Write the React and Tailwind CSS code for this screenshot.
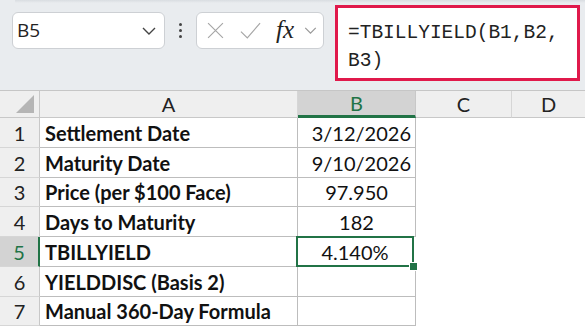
import React from 'react';

// Excel-style sheet: formula bar + small grid, B5 selected

const rows = [
  { n: 1, label: 'Settlement Date', value: '3/12/2026', align: 'right', h: 'h-[30px]' },
  { n: 2, label: 'Maturity Date', value: '9/10/2026', align: 'right', h: 'h-[30px]' },
  { n: 3, label: 'Price (per $100 Face)', value: '97.950', align: 'center', h: 'h-[29px]' },
  { n: 4, label: 'Days to Maturity', value: '182', align: 'center', h: 'h-[30px]' },
  { n: 5, label: 'TBILLYIELD', value: '4.140%', align: 'center', h: 'h-[30px]' },
  { n: 6, label: 'YIELDDISC (Basis 2)', value: '', align: 'center', h: 'h-[30px]' },
  { n: 7, label: 'Manual 360-Day Formula', value: '', align: 'center', h: 'h-[29px]' },
];

const Chevron = ({ className }) => (
  <svg viewBox="0 0 14 8" className={className} fill="none" stroke="currentColor" strokeWidth="1.4">
    <path d="M1 1l6 6 6-6" />
  </svg>
);

function FormulaBar() {
  return (
    <div className="relative h-[90px] bg-[#e9ecef] flex items-start">
      <div className="absolute top-0 left-[15px] right-0 h-[3px] bg-gradient-to-b from-[#d9dde1] to-[#e9ecef]" />
      <div className="ml-[12px] mt-[12px] w-[153px] h-[37px] bg-white border border-[#cdd0d4] rounded-[6px] flex items-center pl-[4px] pr-[8px]">
        <span className="text-[19px] text-[#222] flex-1" style={{ fontFamily: '"Open Sans", sans-serif' }}>B5</span>
        <Chevron className="w-[14px] h-[8px] text-[#444]" />
      </div>
      <div className="w-[31px] h-[37px] mt-[12px] flex flex-col items-center justify-center gap-[3px]">
        <span className="w-[3px] h-[3px] bg-[#444] rounded-full" />
        <span className="w-[3px] h-[3px] bg-[#444] rounded-full" />
        <span className="w-[3px] h-[3px] bg-[#444] rounded-full" />
      </div>
      <div className="mt-[12px] w-[128px] h-[37px] bg-white border border-[#cdd0d4] rounded-[6px] flex items-center pl-[10px]">
        <svg viewBox="0 0 16 16" className="w-[17px] h-[17px] text-[#a6a6a6]" fill="none" stroke="currentColor" strokeWidth="1.1">
          <path d="M1 1l14 14M15 1L1 15" />
        </svg>
        <svg viewBox="0 0 20 16" className="ml-[15px] w-[23px] h-[17px] text-[#a6a6a6]" fill="none" stroke="currentColor" strokeWidth="1.1">
          <path d="M1 9l6 6L19 1" />
        </svg>
        <span className="ml-[14px] text-[25px] italic text-[#222] leading-none -mt-[3px]" style={{ fontFamily: '"Liberation Serif", serif' }}>fx</span>
        <Chevron className="ml-[10px] w-[13px] h-[7px] text-[#999]" />
      </div>
      <div className="ml-[11px] mt-[5px] w-[245px] h-[76px] bg-white border-[3px] border-[#e0194b] pl-[10px] pt-[11px]">
        <div className="text-[19.5px] leading-[28px] text-[#222]" style={{ fontFamily: '"Liberation Mono", monospace' }}>
          =TBILLYIELD(B1,B2,<br />B3)
        </div>
      </div>
    </div>
  );
}

export default function App() {
  return (
    <div className="w-[585px] h-[327px] overflow-hidden bg-white" style={{ fontFamily: 'Lato, "Liberation Sans", sans-serif' }}>
      <FormulaBar />
      {/* column headers */}
      <div className="flex h-[28px] border-t border-[#c6c6c6] bg-[#efefef] text-[20px] text-[#222]">
        <div className="w-[40px] border-r border-[#c8c8c8] border-b border-b-[#c8c8c8] relative">
          <div className="absolute right-[5px] bottom-[4px] w-0 h-0 border-l-[18px] border-l-transparent border-b-[18px] border-b-[#b5b5b5]" />
        </div>
        <div className="w-[258px] border-r border-[#d6d6d6] border-b border-b-[#c8c8c8] flex items-center justify-center">A</div>
        <div className="w-[118px] bg-[#d3d3d3] border-r border-[#c8c8c8] border-b-[3px] border-b-[#217346] flex items-center justify-center text-[#217346]">B</div>
        <div className="w-[96px] border-r border-[#d6d6d6] border-b border-b-[#c8c8c8] flex items-center justify-center">C</div>
        <div className="flex-1 border-b border-b-[#c8c8c8] flex items-center justify-center">D</div>
      </div>
      {rows.map((r) => {
        const sel = r.n === 5;
        return (
          <div key={r.n} className={`flex ${r.h} text-[20px] text-[#111]`}>
            <div
              className={
                sel
                  ? 'w-[40px] bg-[#d3d3d3] border-r-2 border-[#217346] border-b border-b-[#d6d6d6] flex items-center justify-center text-[#217346]'
                  : 'w-[40px] bg-[#efefef] border-r border-[#c8c8c8] border-b border-b-[#d6d6d6] flex items-center justify-center text-[#222]'
              }
            >
              {r.n}
            </div>
            <div className={`${sel ? 'w-[257px]' : 'w-[258px]'} border-r border-b border-[#bdbdbd] flex items-center pl-[5px] font-bold`}>
              {r.label}
            </div>
            <div
              className={
                sel
                  ? 'relative w-[118px] border-2 border-[#217346] -mt-[1px] -ml-[1px] flex items-center justify-center'
                  : `w-[118px] border-r border-b border-[#bdbdbd] flex items-center ${r.align === 'right' ? 'justify-end pr-[4px]' : 'justify-center'}`
              }
            >
              {r.value}
              {sel && (
                <span className="absolute -right-[6px] -bottom-[6px] w-[9px] h-[9px] bg-[#217346] border border-white" />
              )}
            </div>
            <div className="flex-1" />
          </div>
        );
      })}
    </div>
  );
}
